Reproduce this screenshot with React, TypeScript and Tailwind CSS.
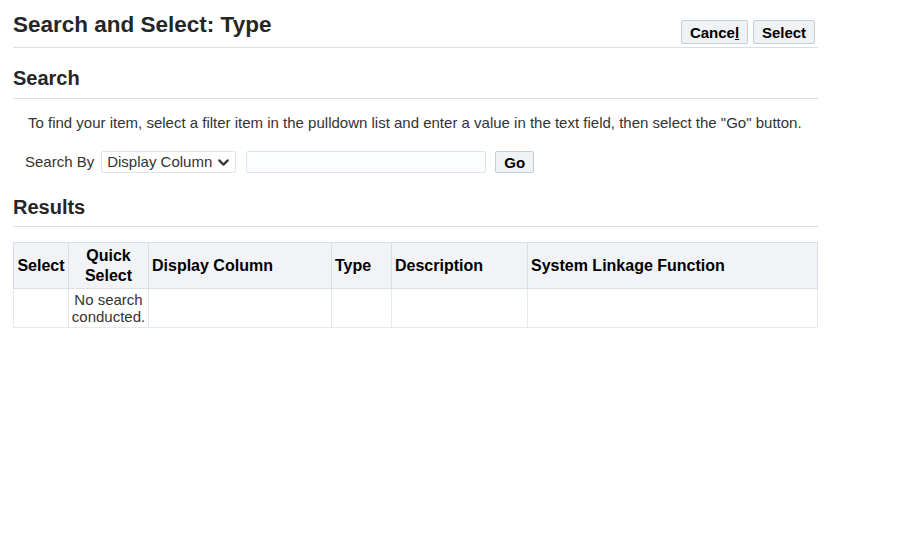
import { ChevronDown } from 'lucide-react';

const cols = [
  { label: 'Select', w: 'w-[55px]', center: true },
  { label: 'Quick Select', w: 'w-[80px]', center: true },
  { label: 'Display Column', w: 'w-[183px]' },
  { label: 'Type', w: 'w-[60px]' },
  { label: 'Description', w: 'w-[136px]' },
  { label: 'System Linkage Function', w: '' },
];

function Btn({ children, w }: { children: React.ReactNode; w: string }) {
  return (
    <button className={`${w} h-[24px] bg-[#f1f2f3] border border-[#c4ced7] rounded-[2px] text-[15px] font-bold text-[#000] leading-none`}>
      {children}
    </button>
  );
}

export default function App() {
  return (
    <div className="w-[920px] h-[552px] bg-white text-[#333] font-['Liberation_Sans',Arial,sans-serif]">
      <div className="ml-[13px] w-[805px] pt-[12px]">
        {/* Header */}
        <div className="flex items-start justify-between border-b border-[#d6dfe6] pb-[3px]">
          <h1 className="text-[22.5px] font-bold leading-[26px] text-[#262626]">Search and Select: Type</h1>
          <div className="flex gap-[5px] mt-[8px] mr-[3px]">
            <Btn w="w-[67px]">
              Cance<span className="underline">l</span>
            </Btn>
            <Btn w="w-[62px]">Select</Btn>
          </div>
        </div>

        {/* Search */}
        <h2 className="mt-[18px] text-[20px] font-bold leading-[24px] text-[#262626] border-b border-[#d6dfe6] pb-[8px]">Search</h2>
        <p className="mt-[15px] ml-[15px] text-[15px] leading-[18px] text-[#333]">
          To find your item, select a filter item in the pulldown list and enter a value in the text field, then select the "Go" button.
        </p>
        <div className="mt-[19px] ml-[12px] flex items-center h-[22px]">
          <span className="text-[15px] text-[#333] mr-[7px]">Search By</span>
          <div className="h-[22px] w-[135px] border border-[#dfe4ea] rounded-[2px] flex items-center justify-between pl-[5px] pr-[3px] text-[15px] text-[#333]">
            <span>Display Column</span>
            <ChevronDown size={17} strokeWidth={3} className="text-[#333]" />
          </div>
          <div className="ml-[10px] h-[22px] w-[240px] border border-[#dfe4ea] rounded-[2px] bg-[#fcfdfe]" />
          <button className="ml-[9px] h-[22px] w-[39px] bg-[#f1f2f3] border border-[#c4ced7] rounded-[2px] text-[15px] font-bold text-black leading-none">
            Go
          </button>
        </div>

        {/* Results */}
        <h2 className="mt-[22px] text-[20px] font-bold leading-[24px] text-[#262626] border-b border-[#d6dfe6] pb-[7px]">Results</h2>
        <table className="mt-[15px] w-full border-collapse text-[15px]">
          <thead>
            <tr className="bg-[#f1f3f7] h-[46px]">
              {cols.map(c => (
                <th
                  key={c.label}
                  className={`${c.w} border border-[#d6dfe6] font-bold text-[16px] text-black leading-[20px] ${c.center ? 'text-center' : 'text-left'} ${c.label === 'Quick Select' ? 'px-[12px]' : 'px-[3px]'}`}
                >
                  {c.label}
                </th>
              ))}
            </tr>
          </thead>
          <tbody>
            <tr className="h-[39px]">
              <td className="border border-[#e4e9ee]" />
              <td className="border border-[#e4e9ee] text-center leading-[17px] text-[#333]">
                No search conducted.
              </td>
              <td className="border border-[#e4e9ee]" />
              <td className="border border-[#e4e9ee]" />
              <td className="border border-[#e4e9ee]" />
              <td className="border border-[#e4e9ee]" />
            </tr>
          </tbody>
        </table>
      </div>
    </div>
  );
}
